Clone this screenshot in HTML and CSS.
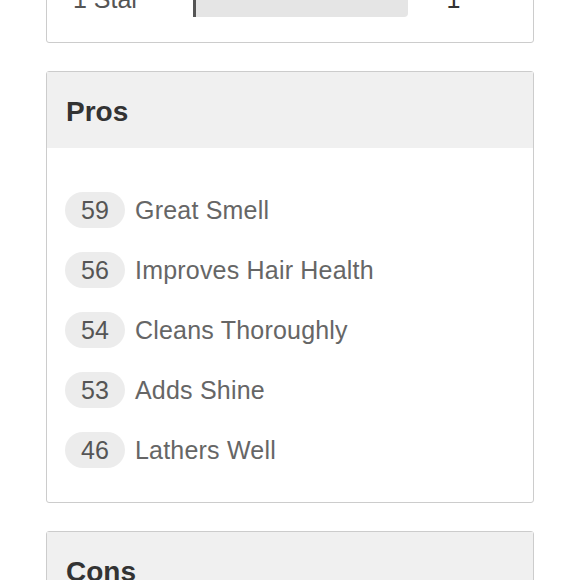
FILE: index.html
```html
<!DOCTYPE html>
<html>
<head>
<meta charset="utf-8">
<link rel="stylesheet" href="styles.css">
</head>
<body>
<div class="page">
  <section class="card top-card">
    <div class="star-row">
      <span class="star-label">1 Star</span>
      <div class="bar"><div class="bar-fill"></div></div>
      <span class="star-count">1</span>
    </div>
  </section>

  <section class="card">
    <div class="card-head">Pros</div>
    <ul class="tags">
      <li class="tag"><span class="pill">59</span><span class="tag-text">Great Smell</span></li>
      <li class="tag"><span class="pill">56</span><span class="tag-text">Improves Hair Health</span></li>
      <li class="tag"><span class="pill">54</span><span class="tag-text">Cleans Thoroughly</span></li>
      <li class="tag"><span class="pill">53</span><span class="tag-text">Adds Shine</span></li>
      <li class="tag"><span class="pill">46</span><span class="tag-text">Lathers Well</span></li>
    </ul>
  </section>

  <section class="card">
    <div class="card-head">Cons</div>
    <ul class="tags">
      <li class="tag"><span class="pill">12</span><span class="tag-text">Dries Hair</span></li>
    </ul>
  </section>
</div>
</body>
</html>
```

FILE: styles.css
```css
html, body {
  margin: 0;
  padding: 0;
  background: #fff;
}
body {
  font-family: "Liberation Sans", Arial, sans-serif;
  color: #666;
}
.page {
  padding: 0 46px;
  margin-top: -45px;
  display: flex;
  flex-direction: column;
  gap: 28px;
}
.card {
  border: 1px solid #cccccc;
  border-radius: 3px;
  background: #fff;
}
.top-card {
  padding: 25px 0 25px 26px;
}
.star-row {
  display: flex;
  align-items: center;
  height: 36px;
}
.star-label {
  width: 120px;
  font-size: 25px;
  line-height: 36px;
  color: #555;
}
.bar {
  width: 212px;
  height: 36px;
  border-left: 3px solid #555;
  display: flex;
}
.bar-fill {
  flex: 1;
  background: #e5e5e5;
  border-radius: 0 4px 4px 0;
}
.star-count {
  flex: 1;
  text-align: center;
  font-size: 25px;
  line-height: 36px;
  color: #333;
  padding-right: 34px;
}
.card-head {
  background: #f0f0f0;
  height: 76px;
  line-height: 80px;
  padding-left: 19px;
  font-size: 28px;
  font-weight: bold;
  color: #333;
}
.tags {
  list-style: none;
  margin: 0;
  padding: 44px 18px 34px;
  display: flex;
  flex-direction: column;
  gap: 24px;
}
.tag {
  display: flex;
  align-items: center;
  gap: 10px;
  height: 36px;
}
.pill {
  width: 60px;
  height: 36px;
  border-radius: 18px;
  background: #ececec;
  color: #555;
  font-size: 25px;
  line-height: 37px;
  text-align: center;
}
.tag-text {
  font-size: 25px;
  line-height: 37px;
  letter-spacing: 0.2px;
  color: #666;
}
```
